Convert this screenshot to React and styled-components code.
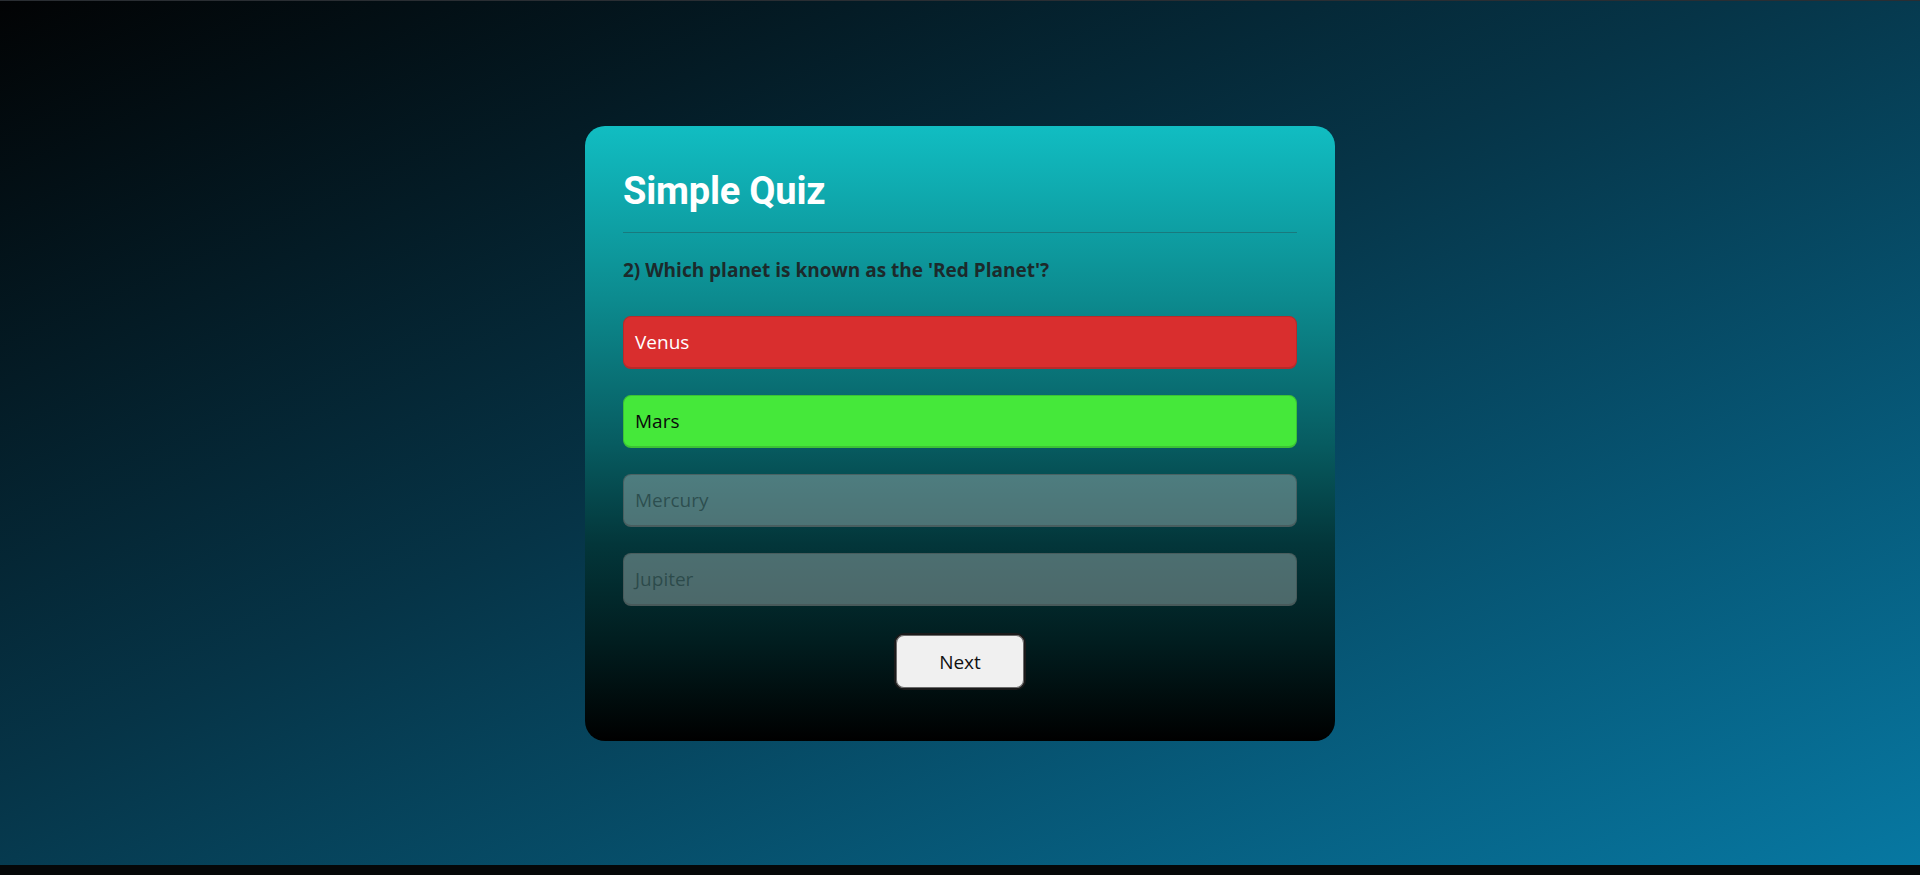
import { createGlobalStyle, styled } from 'styled-components';

const GlobalStyle = createGlobalStyle`
  * {
    box-sizing: border-box;
  }
  html, body {
    margin: 0;
    padding: 0;
    background: #050708;
  }
  body {
    font-family: 'Open Sans', 'Noto Sans', sans-serif;
  }
`;

const Page = styled.main`
  min-height: 865px;
  border-top: 1px solid #2a2e33;
  background: linear-gradient(to bottom right, #020304 0%, #063447 45%, #0778a2 100%);
  display: flex;
  justify-content: center;
  align-items: flex-start;
  padding-top: 125px;
`;

const Card = styled.section`
  width: 750px;
  height: 615px;
  padding: 38px 38px 0;
  border-radius: 20px;
  background: linear-gradient(
    180deg,
    #11bdc2 0%,
    #0c8b8f 28%,
    #075b60 52%,
    #03363a 68%,
    #011d1f 84%,
    #000 100%
  );
`;

const Title = styled.h1`
  margin: 0;
  padding: 6px 0 20px;
  font-family: Roboto, 'Liberation Sans', sans-serif;
  font-weight: 700;
  font-size: 38px;
  letter-spacing: -0.2px;
  line-height: 42px;
  color: #fff;
  border-bottom: 1px solid #197a7e;
`;

const Question = styled.h2`
  margin: 24px 0 33px;
  font-size: 19px;
  font-weight: 700;
  line-height: 26px;
  color: #1c2a2b;
`;

const Options = styled.div`
  display: flex;
  flex-direction: column;
  gap: 26px;
`;

const tones = {
  wrong: { bg: '#d92e2e', color: '#fff', border: '#b82a2a' },
  right: { bg: '#45e83a', color: '#0a0a0a', border: '#3cc234' },
  idle: { bg: 'rgba(150, 170, 170, 0.5)', color: 'rgba(30, 60, 60, 0.7)', border: 'rgba(70, 80, 80, 0.6)' },
};

const Option = styled.button`
  height: 53px;
  width: 100%;
  padding: 0 11px;
  text-align: left;
  font-family: 'Open Sans', 'Noto Sans', sans-serif;
  font-size: 19px;
  border-radius: 8px;
  border: 1px solid ${(p) => tones[p.$tone].border};
  border-bottom-width: 2px;
  background: ${(p) => tones[p.$tone].bg};
  color: ${(p) => tones[p.$tone].color};
  cursor: pointer;
  &:disabled {
    cursor: default;
  }
`;

const Footer = styled.div`
  display: flex;
  justify-content: center;
  margin-top: 27px;
`;

const NextButton = styled.button`
  width: 132px;
  height: 57px;
  border-radius: 10px;
  border: 2px solid #1a1a1a;
  background: #f0f0f0;
  font-family: 'Open Sans', 'Noto Sans', sans-serif;
  font-size: 19px;
  color: #111;
  box-shadow: 0 0 0 1px #6a6a6a inset;
  cursor: pointer;
`;

const answers = [
  { text: 'Venus', tone: 'wrong' },
  { text: 'Mars', tone: 'right' },
  { text: 'Mercury', tone: 'idle' },
  { text: 'Jupiter', tone: 'idle' },
];

export default function App() {
  return (
    <>
      <GlobalStyle />
      <Page>
        <Card>
          <Title>Simple Quiz</Title>
          <Question>2) Which planet is known as the 'Red Planet'?</Question>
          <Options>
            {answers.map((a) => (
              <Option key={a.text} $tone={a.tone} disabled={a.tone === 'idle'}>
                {a.text}
              </Option>
            ))}
          </Options>
          <Footer>
            <NextButton>Next</NextButton>
          </Footer>
        </Card>
      </Page>
    </>
  );
}
